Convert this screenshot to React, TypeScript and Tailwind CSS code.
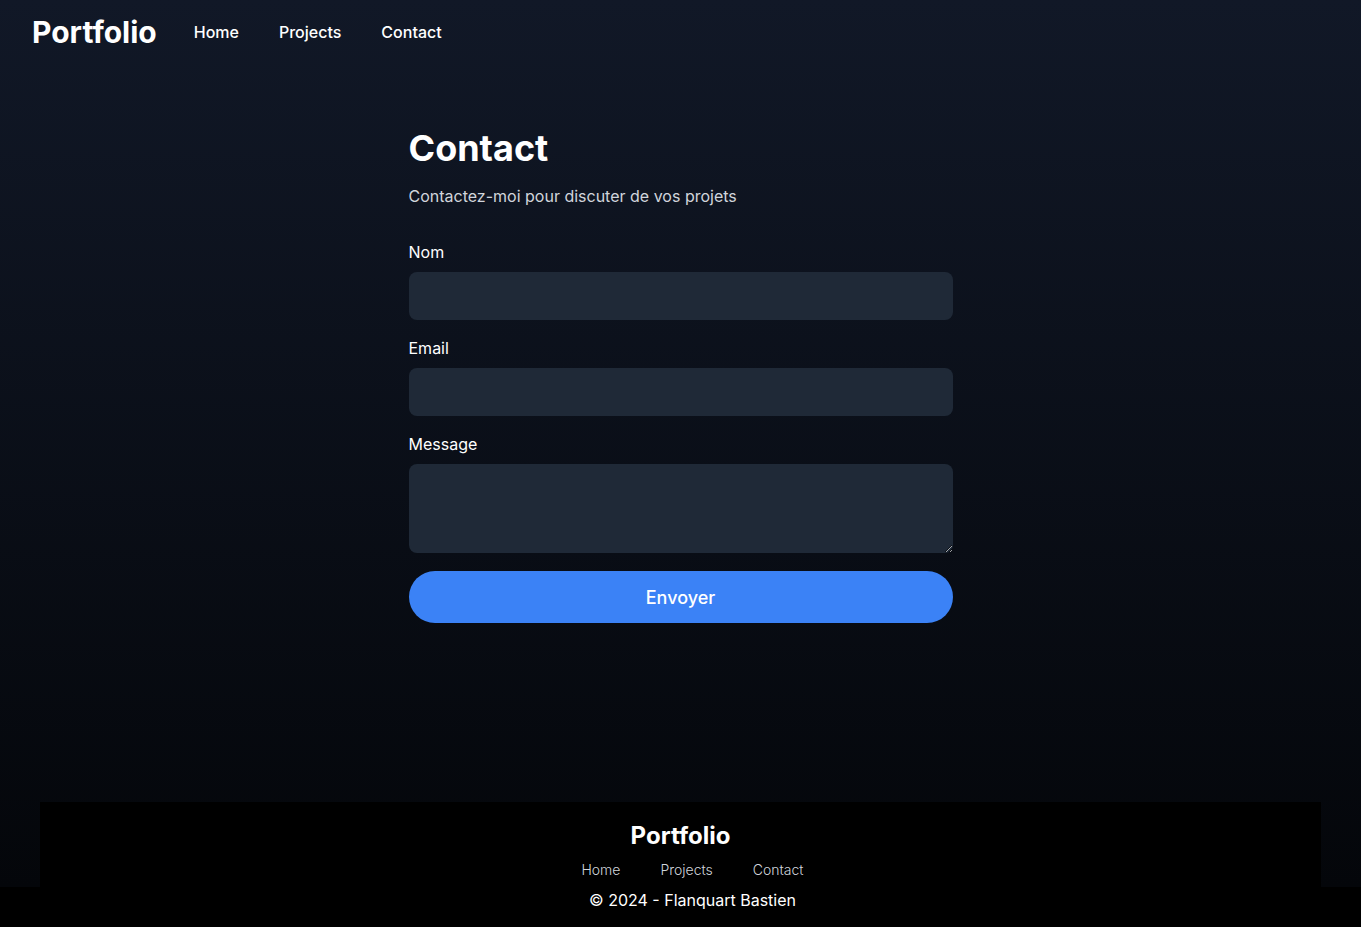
import React from "react";

export default function App() {
  return (
    <div
      className="min-h-screen flex flex-col bg-black bg-[linear-gradient(to_bottom,#111827_0px,#04060a_887px,#000000_887px)] text-white"
      style={{ fontFamily: "Inter, 'Noto Sans', sans-serif" }}
    >
      <header className="h-16 flex items-center px-8">
        <div className="text-[30px] font-bold leading-9">Portfolio</div>
        <nav className="flex items-center ml-[37px] gap-10 text-base font-medium">
          <a>Home</a>
          <a>Projects</a>
          <a>Contact</a>
        </nav>
      </header>

      <main className="flex-1">
        <div className="max-w-xl mx-auto px-4 pt-16">
          <h1 className="text-4xl font-bold leading-10 mb-4">Contact</h1>
          <p className="text-gray-300 text-base leading-6 mb-8">
            Contactez-moi pour discuter de vos projets
          </p>
          <div className="flex flex-col">
            <label className="text-base leading-6 mb-2">Nom</label>
            <input className="block h-12 w-full rounded-lg bg-[#1f2937] px-3 mb-4 outline-none" />
            <label className="text-base leading-6 mb-2">Email</label>
            <input className="block h-12 w-full rounded-lg bg-[#1f2937] px-3 mb-4 outline-none" />
            <label className="text-base leading-6 mb-2">Message</label>
            <textarea className="block h-[89px] w-full rounded-lg bg-[#1f2937] px-3 py-2 mb-[18px] outline-none" />
            <button className="h-[52px] w-full rounded-full bg-[#3b82f6] text-lg font-medium leading-7 pt-px">
              Envoyer
            </button>
          </div>
        </div>
      </main>

      <footer className="mx-10 mt-[179px] bg-black pt-[18px] pb-4 flex flex-col items-center">
        <div className="text-2xl font-bold leading-8 mb-2">Portfolio</div>
        <div className="flex gap-10 pl-6 text-sm font-light text-gray-300 leading-5 mb-2">
          <a>Home</a>
          <a>Projects</a>
          <a>Contact</a>
        </div>
        <div className="pl-6 text-base leading-6">© 2024 - Flanquart Bastien</div>
      </footer>
    </div>
  );
}
